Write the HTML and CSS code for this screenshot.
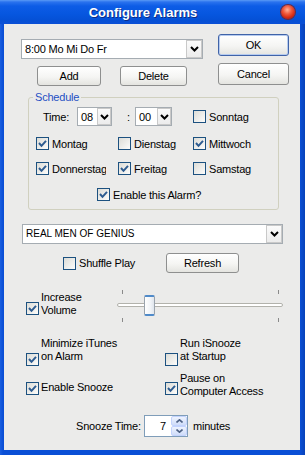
FILE: index.html
```html
<!DOCTYPE html>
<html lang="en">
<head>
  <meta charset="UTF-8" />
  <title>Configure Alarms</title>
  <link rel="stylesheet" href="styles.css">
</head>
<body>
  <div class="window">
    <div class="titlebar">
      <span class="title">Configure Alarms</span>
      <span class="close"></span>
    </div>

    <div class="client">
      <!-- alarm list + ok/cancel -->
      <div class="top">
        <div class="top-left">
          <div class="combo alarm-combo">
            <span class="combo-text">8:00 Mo Mi Do Fr</span>
            <span class="combo-btn"><svg width="9" height="6" viewBox="0 0 9 6"><polyline points="1,1 4.5,4.5 8,1" fill="none" stroke="#000" stroke-width="2"/></svg></span>
          </div>
          <div class="alarm-buttons">
            <button class="btn btn-add">Add</button>
            <button class="btn btn-delete">Delete</button>
          </div>
        </div>
        <div class="top-right">
          <button class="btn btn-ok">OK</button>
          <button class="btn btn-cancel">Cancel</button>
        </div>
      </div>

      <fieldset class="schedule">
        <legend>Schedule</legend>

        <div class="time-row">
          <span class="time-label">Time:</span>
          <div class="combo small-combo hour">
            <span class="combo-text">08</span>
            <span class="combo-btn"><svg width="9" height="6" viewBox="0 0 9 6"><polyline points="1,1 4.5,4.5 8,1" fill="none" stroke="#000" stroke-width="2"/></svg></span>
          </div>
          <span class="colon">:</span>
          <div class="combo small-combo minute">
            <span class="combo-text">00</span>
            <span class="combo-btn"><svg width="9" height="6" viewBox="0 0 9 6"><polyline points="1,1 4.5,4.5 8,1" fill="none" stroke="#000" stroke-width="2"/></svg></span>
          </div>
          <label class="check sunday"><span class="cb"></span><span class="check-text">Sonntag</span></label>
        </div>

        <div class="day-row row-2">
          <label class="check"><span class="cb"><svg width="11" height="11" viewBox="0 0 11 11"><polyline points="2,5 4.5,7.8 9,2.8" fill="none" stroke="#2d5b90" stroke-width="2"/></svg></span><span class="check-text">Montag</span></label>
          <label class="check"><span class="cb"></span><span class="check-text">Dienstag</span></label>
          <label class="check"><span class="cb"><svg width="11" height="11" viewBox="0 0 11 11"><polyline points="2,5 4.5,7.8 9,2.8" fill="none" stroke="#2d5b90" stroke-width="2"/></svg></span><span class="check-text">Mittwoch</span></label>
        </div>

        <div class="day-row row-3">
          <label class="check"><span class="cb"><svg width="11" height="11" viewBox="0 0 11 11"><polyline points="2,5 4.5,7.8 9,2.8" fill="none" stroke="#2d5b90" stroke-width="2"/></svg></span><span class="check-text clip">Donnerstag</span></label>
          <label class="check"><span class="cb"><svg width="11" height="11" viewBox="0 0 11 11"><polyline points="2,5 4.5,7.8 9,2.8" fill="none" stroke="#2d5b90" stroke-width="2"/></svg></span><span class="check-text">Freitag</span></label>
          <label class="check"><span class="cb"></span><span class="check-text">Samstag</span></label>
        </div>

        <div class="enable-row">
          <label class="check"><span class="cb"><svg width="11" height="11" viewBox="0 0 11 11"><polyline points="2,5 4.5,7.8 9,2.8" fill="none" stroke="#2d5b90" stroke-width="2"/></svg></span><span class="check-text">Enable this Alarm?</span></label>
        </div>
      </fieldset>

      <div class="combo song-combo">
        <span class="combo-text">REAL MEN OF GENIUS</span>
        <span class="combo-btn"><svg width="9" height="6" viewBox="0 0 9 6"><polyline points="1,1 4.5,4.5 8,1" fill="none" stroke="#000" stroke-width="2"/></svg></span>
      </div>

      <div class="shuffle-row">
        <label class="check shuffle"><span class="cb"></span><span class="check-text">Shuffle Play</span></label>
        <button class="btn btn-refresh">Refresh</button>
      </div>

      <div class="volume-row">
        <label class="check multi volume">
          <span class="cb"><svg width="11" height="11" viewBox="0 0 11 11"><polyline points="2,5 4.5,7.8 9,2.8" fill="none" stroke="#2d5b90" stroke-width="2"/></svg></span>
          <span class="check-text two-line">Increase<br>Volume</span>
        </label>
        <div class="slider">
          <div class="ticks"><span class="tick"></span><span class="tick"></span></div>
          <div class="track-area">
            <div class="track"></div>
            <span class="thumb"></span>
          </div>
          <div class="ticks"><span class="tick"></span><span class="tick"></span></div>
        </div>
      </div>

      <div class="option-row minimize-row">
        <label class="check multi opt-left">
          <span class="cb"><svg width="11" height="11" viewBox="0 0 11 11"><polyline points="2,5 4.5,7.8 9,2.8" fill="none" stroke="#2d5b90" stroke-width="2"/></svg></span>
          <span class="check-text two-line">Minimize iTunes<br>on Alarm</span>
        </label>
        <label class="check multi">
          <span class="cb"></span>
          <span class="check-text two-line">Run iSnooze<br>at Startup</span>
        </label>
      </div>

      <div class="option-row snooze-row">
        <label class="check multi opt-left">
          <span class="cb"><svg width="11" height="11" viewBox="0 0 11 11"><polyline points="2,5 4.5,7.8 9,2.8" fill="none" stroke="#2d5b90" stroke-width="2"/></svg></span>
          <span class="check-text single">Enable Snooze</span>
        </label>
        <label class="check multi">
          <span class="cb"><svg width="11" height="11" viewBox="0 0 11 11"><polyline points="2,5 4.5,7.8 9,2.8" fill="none" stroke="#2d5b90" stroke-width="2"/></svg></span>
          <span class="check-text two-line">Pause on<br>Computer Access</span>
        </label>
      </div>

      <div class="snooze-time">
        <span class="snooze-label">Snooze Time:</span>
        <div class="spin">
          <span class="spin-value">7</span>
          <span class="spin-btns">
            <span class="spin-btn"><svg width="7" height="4" viewBox="0 0 7 4"><polyline points="0.5,3.5 3.5,0.8 6.5,3.5" fill="none" stroke="#4d6185" stroke-width="1.6"/></svg></span>
            <span class="spin-btn"><svg width="7" height="4" viewBox="0 0 7 4"><polyline points="0.5,0.5 3.5,3.2 6.5,0.5" fill="none" stroke="#4d6185" stroke-width="1.6"/></svg></span>
          </span>
        </div>
        <span class="minutes">minutes</span>
      </div>
    </div>
  </div>
</body>
</html>
```

FILE: styles.css
```css
* {
  box-sizing: border-box;
}
body {
  margin: 0;
  font-family: "Liberation Sans", Arial, sans-serif;
  font-size: 11px;
  letter-spacing: -0.2px;
  color: #000;
  background: #fff;
}
.window {
  width: 305px;
  height: 455px;
  display: flex;
  flex-direction: column;
  background: linear-gradient(to right, #1a5fe0, #0a4fd6 3px, #0a4fd6 300px, #0842b8);
}
.titlebar {
  height: 24px;
  display: flex;
  align-items: center;
  padding-left: 5px;
  background: linear-gradient(to bottom, #5a9af5 0, #2a72ee 2px, #0d5ce6 6px, #0656df 60%, #0550d5 85%, #0a4fd6 100%);
}
.title {
  flex: 1;
  text-align: center;
  color: #fff;
  font-weight: bold;
  font-size: 13px;
  letter-spacing: 0;
  text-shadow: 1px 1px 0 #0b2d86;
}
.close {
  width: 14px;
  height: 14px;
  margin-right: 10px;
  border-radius: 50%;
  background: radial-gradient(circle at 45% 35%, #ffb199 0, #f05a3c 35%, #d52a12 65%, #9c1608 100%);
  box-shadow: 0 0 0 1px #6a2a40;
}
.client {
  flex: 1;
  margin: 0 5px 5px 4px;
  background: #ebebea;
}

/* generic controls */
.btn {
  font: inherit;
  letter-spacing: inherit;
  color: #000;
  padding: 0;
  border: 1px solid #8e8f8f;
  border-radius: 3px;
  background: linear-gradient(#ffffff, #f5f5f3 55%, #e4e4e0);
}
.btn-ok {
  border-color: #4063a8;
  box-shadow: inset 0 0 0 1px #b6cbef;
}
.combo {
  display: flex;
  height: 20px;
  background: #fff;
  border: 1px solid #a5acb2;
}
.combo-text {
  flex: 1;
  padding-left: 3px;
  line-height: 18px;
  white-space: nowrap;
  overflow: hidden;
}
.combo-btn {
  width: 16px;
  display: flex;
  align-items: center;
  justify-content: center;
  border: 1px solid #c9c9c9;
  background: linear-gradient(#fbfbfb, #ececec);
}
.check {
  display: flex;
  align-items: center;
}
.cb {
  width: 13px;
  height: 13px;
  flex: none;
  border: 1px solid #1c5180;
  background: linear-gradient(135deg, #dcdcd7, #fcfcfb);
  display: flex;
  align-items: center;
  justify-content: center;
}
.check-text {
  margin-left: 3px;
  white-space: nowrap;
}
.clip {
  width: 54px;
  overflow: hidden;
}

/* top section */
.top {
  display: flex;
  margin-top: 10px;
  padding-left: 17px;
}
.top-left {
  width: 182px;
  margin-top: 5px;
}
.alarm-buttons {
  display: flex;
  margin-top: 7px;
  padding-left: 16px;
}
.btn-add {
  width: 64px;
  height: 20px;
}
.btn-delete {
  width: 67px;
  height: 20px;
  margin-left: 19px;
}
.top-right {
  display: flex;
  flex-direction: column;
  margin-left: 15px;
}
.btn-ok,
.btn-cancel {
  width: 71px;
  height: 22px;
}
.btn-cancel {
  margin-top: 7px;
}

/* schedule group */
.schedule {
  width: 251px;
  height: 119px;
  margin: 5px 0 0 24px;
  padding: 0;
  border: 1px solid #d0d0bf;
  border-radius: 3px;
  min-width: 0;
}
.schedule legend {
  margin-left: 4px;
  padding: 0 2px;
  line-height: 13px;
  color: #1f4fc4;
}
.time-row {
  display: flex;
  align-items: center;
  height: 19px;
  margin-top: 3px;
  padding-left: 14px;
}
.time-label {
  width: 34px;
}
.small-combo {
  height: 19px;
}
.small-combo .combo-btn {
  width: 14px;
}
.hour {
  width: 35px;
}
.minute {
  width: 37px;
}
.colon {
  width: 8px;
  margin-left: 15px;
}
.sunday {
  margin-left: 21px;
}
.day-row {
  display: grid;
  grid-template-columns: 82px 75px auto;
  align-items: center;
  height: 19px;
  padding-left: 7px;
}
.row-2 {
  margin-top: 8px;
}
.row-3 {
  margin-top: 6px;
}
.enable-row {
  display: flex;
  align-items: center;
  height: 19px;
  margin-top: 7px;
  padding-left: 68px;
}

/* song */
.song-combo {
  width: 261px;
  margin: 14px 0 0 18px;
}
.song-combo .combo-text {
  font-size: 10px;
  letter-spacing: 0;
}
.shuffle-row {
  display: flex;
  align-items: center;
  height: 20px;
  margin-top: 9px;
  padding-left: 59px;
}
.shuffle {
  width: 103px;
}
.btn-refresh {
  width: 73px;
  height: 20px;
}

/* volume */
.volume-row {
  display: flex;
  height: 34px;
  margin-top: 16px;
  padding-left: 22px;
}
.multi {
  align-items: flex-start;
}
.check-text.two-line,
.check-text.single {
  margin-left: 2px;
  line-height: 13px;
}
.volume {
  width: 91px;
}
.volume .cb {
  margin-top: 13px;
}
.volume .two-line {
  margin-top: 2px;
}
.slider {
  width: 166px;
  display: flex;
  flex-direction: column;
}
.ticks {
  height: 5px;
  display: flex;
  justify-content: space-between;
  padding: 0 4px 0 5px;
}
.tick {
  width: 1px;
  height: 4px;
  margin-top: 1px;
  background: #8a8a8a;
}
.track-area {
  position: relative;
  height: 23px;
}
.track {
  height: 4px;
  margin-top: 9px;
  border: 1px solid #b2b2ac;
  border-radius: 2px;
  background: #fff;
}
.thumb {
  position: absolute;
  top: 1px;
  left: 27px;
  width: 11px;
  height: 21px;
  border: 1px solid #9aa3ad;
  border-top: 2px solid #4f8ac9;
  border-bottom: 2px solid #4f8ac9;
  border-radius: 2px;
  background: linear-gradient(to right, #ffffff, #f1f4f8 60%, #dfe5ec);
}

/* option rows */
.option-row {
  display: flex;
  padding-left: 22px;
}
.opt-left {
  width: 139px;
}
.minimize-row {
  height: 30px;
  margin-top: 14px;
}
.minimize-row .cb {
  margin-top: 16px;
}
.snooze-row {
  height: 28px;
  margin-top: 4px;
}
.snooze-row .cb {
  margin-top: 11px;
}
.snooze-row .single {
  margin-top: 10px;
}
.snooze-row .two-line {
  margin-top: 1px;
}

/* snooze time */
.snooze-time {
  display: flex;
  align-items: center;
  height: 22px;
  margin-top: 16px;
  padding-left: 72px;
}
.snooze-label {
  width: 68px;
}
.spin {
  width: 44px;
  height: 22px;
  display: flex;
  background: #fff;
  border: 1px solid #7f9db9;
}
.spin-value {
  flex: 1;
  text-align: right;
  padding-right: 5px;
  line-height: 20px;
}
.spin-btns {
  width: 16px;
  display: flex;
  flex-direction: column;
}
.spin-btn {
  flex: 1;
  display: flex;
  align-items: center;
  justify-content: center;
  border: 1px solid #c3d3fd;
  border-radius: 2px;
  background: linear-gradient(#eef3fe, #cfdcf9);
}
.minutes {
  margin-left: 5px;
}
```
